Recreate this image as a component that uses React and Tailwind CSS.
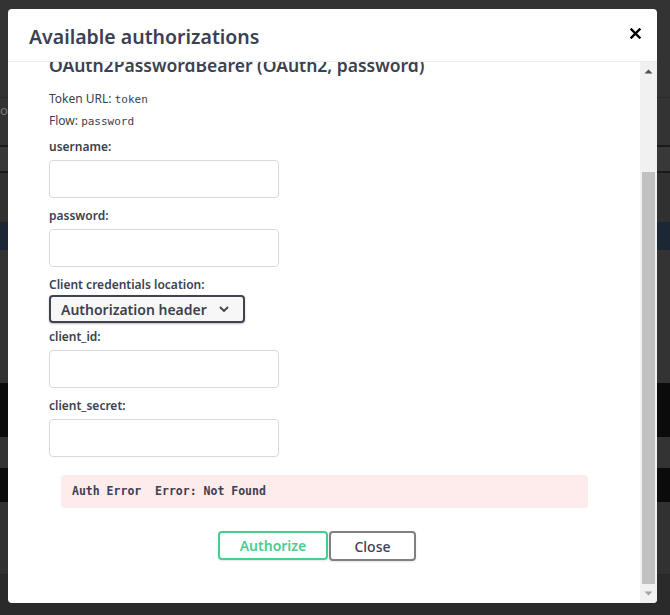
import React from "react";

const labelCls = "block text-[12px] leading-[16px] font-semibold text-[#3b4151]";
const inputCls = "mt-[5px] block w-[230px] h-[38px] rounded-[4px] border border-[#d9d9d9] bg-white";

const Field = ({ label, first }) => (
  <div className={first ? "mt-[9px]" : "mt-[10px]"}>
    <label className={labelCls}>{label}</label>
    <input type="text" className={inputCls} />
  </div>
);

const Backdrop = () => (
  <div className="flex flex-col h-[615px] bg-[#333333]">
    <div className="h-[97px]" />
    <div className="h-[1px] bg-[#2a2a2a]" />
    <div className="h-[47px] text-[13px] text-[#777] pt-[3px]">o</div>
    <div className="h-[2px] bg-[#1a1a1a]" />
    <div className="h-[24px] bg-[#383838]" />
    <div className="h-[2px] bg-[#1a1a1a]" />
    <div className="h-[49px] bg-[#303030]" />
    <div className="h-[28px] bg-[#1c2634]" />
    <div className="h-[133px] bg-[#333333]" />
    <div className="h-[54px] bg-[#0b0b0b]" />
    <div className="h-[31px] bg-[#333333]" />
    <div className="h-[34px] bg-[#0b0b0b]" />
    <div className="h-[72px] bg-[#313131]" />
    <div className="h-[1px] bg-[#262626]" />
    <div className="flex-1 bg-[#2a2a2a]" />
  </div>
);

export default function App() {
  return (
    <div className="relative w-[670px] h-[615px] overflow-hidden" style={{ fontFamily: "'Noto Sans', sans-serif" }}>
      <Backdrop />

      <div className="absolute left-[8px] top-[9px] w-[649px] h-[594px] bg-white rounded-[4px] flex flex-col overflow-hidden">
        <div className="h-[53px] shrink-0 border-b border-[#ebebeb] flex items-center justify-between pl-[21px] pr-[16px]">
          <h3 className="text-[19.5px] font-semibold text-[#3b4151] leading-[28px] mt-[4px]">Available authorizations</h3>
          <button className="leading-none -mt-[4px]">
            <svg width="11" height="11" viewBox="0 0 11 11">
              <path d="M1.5 1.5 L9.5 9.5 M9.5 1.5 L1.5 9.5" stroke="#000" strokeWidth="2.4" strokeLinecap="square" />
            </svg>
          </button>
        </div>

        <div className="flex flex-1 min-h-0">
          <div className="flex-1 overflow-hidden pl-[41px]">
            <h4 className="-mt-[9px] text-[17.5px] leading-[24px] font-semibold text-[#3b4151]">
              OAuth2PasswordBearer (OAuth2, password)
            </h4>
            <p className="mt-[14px] text-[12px] leading-[16px] text-[#3b4151]">
              Token URL: <code className="text-[11px]" style={{ fontFamily: "'DejaVu Sans Mono', monospace" }}>token</code>
            </p>
            <p className="mt-[5px] text-[12px] leading-[16px] text-[#3b4151]">
              Flow: <code className="text-[11px]" style={{ fontFamily: "'DejaVu Sans Mono', monospace" }}>password</code>
            </p>

            <Field label="username:" first />
            <Field label="password:" />

            <div className="mt-[10px]">
              <label className={labelCls}>Client credentials location:</label>
              <div className="mt-[2px] w-[196px] h-[28px] rounded-[4px] border-2 border-[#41444e] bg-[#f7f7f7] flex items-center justify-between pl-[10px] pr-[14px] shadow-[0_1px_2px_rgba(0,0,0,0.25)]">
                <span className="text-[14px] font-semibold text-[#3b4151]">Authorization header</span>
                <svg width="10" height="6" viewBox="0 0 10 6">
                  <path d="M1 1 L5 5 L9 1" fill="none" stroke="#3b4151" strokeWidth="1.8" />
                </svg>
              </div>
            </div>

            <div className="mt-[6px]">
              <label className={labelCls}>client_id:</label>
              <input type="text" className={inputCls} />
            </div>
            <Field label="client_secret:" />

            <div
              className="mt-[18px] ml-[12px] w-[527px] h-[33px] rounded-[4px] bg-[#feecec] flex items-center pl-[11px] text-[11.5px] font-bold text-[#3b4151]"
              style={{ fontFamily: "'DejaVu Sans Mono', monospace" }}
            >
              <span className="whitespace-pre">Auth Error  Error: Not Found</span>
            </div>

            <div className="mt-[23px] flex justify-center pr-[55px] gap-[1px]">
              <button className="w-[110px] h-[29px] rounded-[4px] border-2 border-[#49cc90] text-[14px] font-semibold text-[#49cc90] shadow-[0_1px_2px_rgba(0,0,0,0.1)]">
                Authorize
              </button>
              <button className="w-[87px] h-[30px] rounded-[4px] border-2 border-[#808080] text-[14px] font-medium text-[#3b4151] shadow-[0_1px_2px_rgba(0,0,0,0.1)]">
                Close
              </button>
            </div>
          </div>

          <div className="w-[17px] shrink-0 bg-[#f1f1f1] flex flex-col items-center">
            <svg width="9" height="5" viewBox="0 0 9 5" className="mt-[7px]">
              <path d="M0.5 4.5 L4.5 0.5 L8.5 4.5 Z" fill="#505050" />
            </svg>
            <div className="mt-[98px] w-[13px] h-[412px] bg-[#c1c1c1]" />
            <svg width="9" height="5" viewBox="0 0 9 5" className="mt-[7px]">
              <path d="M0.5 0.5 L4.5 4.5 L8.5 0.5 Z" fill="#a3a3a3" />
            </svg>
          </div>
        </div>
      </div>
    </div>
  );
}
